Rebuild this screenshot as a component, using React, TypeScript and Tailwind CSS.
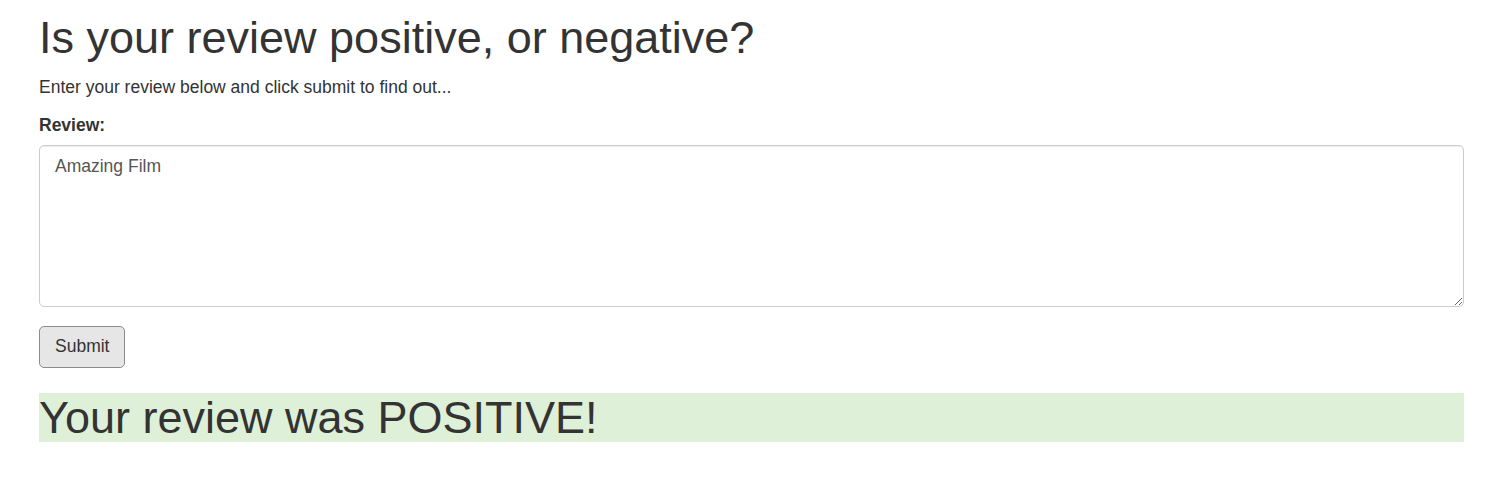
import React, { useState } from "react";

export default function App() {
  const [review, setReview] = useState("Amazing Film");

  return (
    <div className="min-h-screen bg-white font-['Liberation_Sans',Arial,sans-serif] text-[#333] text-[17.5px] leading-[25px]">
      <div className="px-[39px] w-[1503px]">
        {/* Heading */}
        <h1 className="mt-[13px] mb-[12.5px] text-[45px] leading-[49.5px] font-normal">
          Is your review positive, or negative?
        </h1>
        <p className="mb-[12.5px]">
          Enter your review below and click submit to find out...
        </p>

        {/* Form */}
        <form onSubmit={(e) => e.preventDefault()}>
          <div className="mb-[19px]">
            <label className="block mb-[7px] font-bold">Review:</label>
            <textarea
              value={review}
              onChange={(e) => setReview(e.target.value)}
              className="block w-full h-[162px] px-[15px] pt-[8.5px] pb-[7.5px] border border-[#ccc] rounded-[5px] bg-white text-[#555] text-[17.5px] leading-[25px] shadow-[inset_0_1px_1px_rgba(0,0,0,0.075)] outline-none"
            />
          </div>
          <button
            type="submit"
            className="h-[42px] px-[15px] border border-[#8c8c8c] rounded-[5px] bg-[#e6e6e6] text-[#333] text-[17.5px] leading-[25px]"
          >
            Submit
          </button>
        </form>

        {/* Result */}
        <h1 className="mt-[25px] text-[45px] leading-[49.5px] font-normal bg-[#dff0d8]">
          Your review was POSITIVE!
        </h1>
      </div>
    </div>
  );
}
